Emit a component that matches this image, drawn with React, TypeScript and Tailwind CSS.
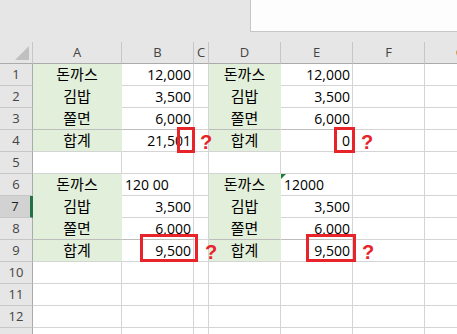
import React from 'react';

type Cell = {
  text?: string;
  green?: boolean;
  align?: 'left' | 'right' | 'center';
  line?: boolean; // darker border under the cell (top of the total row)
  flag?: boolean; // number stored as text marker
};

const colWidths = ['w-[89px]', 'w-[72px]', 'w-[15px]', 'w-[72px]', 'w-[72px]', 'w-[72px]', 'w-[72px]'];
const colNames = ['A', 'B', 'C', 'D', 'E', 'F', 'G'];

const menuRow = (name: string, price: string, line = false): Cell[] => [
  { text: name, green: true, align: 'center', line },
  { text: price, align: 'right', line },
  {},
  { text: name, green: true, align: 'center', line },
  { text: price, align: 'right', line },
  {},
  {},
];

const rows: Cell[][] = [
  menuRow('돈까스', '12,000'),
  menuRow('김밥', '3,500'),
  menuRow('쫄면', '6,000', true),
  [
    { text: '합계', green: true, align: 'center' },
    { text: '21,501', align: 'right' },
    {},
    { text: '합계', green: true, align: 'center' },
    { text: '0', align: 'right' },
    {},
    {},
  ],
  [{}, {}, {}, {}, {}, {}, {}],
  [
    { text: '돈까스', green: true, align: 'center' },
    { text: '120 00', align: 'left' },
    {},
    { text: '돈까스', green: true, align: 'center' },
    { text: '12000', align: 'left', flag: true },
    {},
    {},
  ],
  menuRow('김밥', '3,500'),
  menuRow('쫄면', '6,000', true),
  [
    { text: '합계', green: true, align: 'center' },
    { text: '9,500', align: 'right' },
    {},
    { text: '합계', green: true, align: 'center' },
    { text: '9,500', align: 'right' },
    {},
    {},
  ],
  [{}, {}, {}, {}, {}, {}, {}],
  [{}, {}, {}, {}, {}, {}, {}],
  [{}, {}, {}, {}, {}, {}, {}],
  [{}, {}, {}, {}, {}, {}, {}],
];

const korean = '"Noto Sans CJK KR", sans-serif';
const latin = '"Open Sans", "Noto Sans CJK KR", sans-serif';

function SheetCell({ cell, width, nextGreen }: { cell: Cell; width: string; nextGreen: boolean }) {
  let border = 'border-r border-b border-[#d4d4d4]';
  if (cell.green) border = nextGreen ? 'border-r border-b border-[#e2efda]' : 'border-r border-b border-r-[#e2efda] border-b-[#d4d4d4]';
  if (cell.line) border = cell.green ? 'border-r border-b border-r-[#e2efda] border-b-[#bdbdbd]' : 'border-r border-b border-r-[#d4d4d4] border-b-[#bdbdbd]';
  const justify = cell.align === 'right' ? 'justify-end pr-[2px]' : cell.align === 'left' ? 'justify-start pl-[3px]' : 'justify-center';
  return (
    <div
      className={`relative flex shrink-0 items-center h-[22px] ${width} ${border} ${justify} ${
        cell.green ? 'bg-[#e2efda] text-[15px]' : 'bg-white text-[14px]'
      } text-black whitespace-nowrap`}
      style={{ fontFamily: cell.green ? korean : latin }}
    >
      {cell.flag && (
        <span className="absolute left-0 top-0 w-0 h-0 border-t-[5px] border-r-[5px] border-t-[#1a7f37] border-r-transparent" />
      )}
      {cell.text}
    </div>
  );
}

function Mark({ className }: { className: string }) {
  return <div className={`absolute border-[3px] border-[#e8242b] ${className}`} />;
}

function Question({ className }: { className: string }) {
  return (
    <span
      className={`absolute text-[20px] font-bold leading-none text-[#e8242b] ${className}`}
      style={{ fontFamily: '"Liberation Sans", sans-serif' }}
    >
      ?
    </span>
  );
}

export default function App() {
  return (
    <div className="relative w-[457px] h-[334px] overflow-hidden bg-[#e6e6e6]" style={{ fontFamily: latin }}>
      {/* formula bar strip */}
      <div className="flex h-[42px]">
        <div className="w-[250px] shrink-0" />
        <div className="flex-1 h-[32px] bg-[#fdfdfd] border-l border-b border-[#c6c6c6]" />
      </div>

      {/* column headers */}
      <div className="flex h-[22px]">
        <div className="flex items-end justify-end pr-[3px] pb-[3px] w-[33px] shrink-0 border-r border-b border-r-[#c6c6c6] border-b-[#ababab] bg-[#e6e6e6]">
          <svg width="14" height="14" viewBox="0 0 14 14">
            <polygon points="14,0 14,14 0,14" fill="#c0c0c0" />
          </svg>
        </div>
        {colNames.map((c, i) => (
          <div
            key={c}
            className={`flex shrink-0 items-center justify-center ${colWidths[i]} border-r border-b border-r-[#c6c6c6] border-b-[#ababab] bg-[#e6e6e6] text-[13px] text-[#444]`}
          >
            {c}
          </div>
        ))}
      </div>

      {/* rows */}
      {rows.map((row, r) => (
        <div key={r} className="flex">
          <div
            className={`flex w-[33px] h-[22px] shrink-0 items-center justify-center border-b text-[13px] ${
              r === 6
                ? 'bg-[#d2d2d2] border-r-[3px] border-r-[#217346] border-b-[#c6c6c6] text-[#222]'
                : 'bg-[#e6e6e6] border-r border-r-[#ababab] border-b-[#c6c6c6] text-[#444]'
            }`}
          >
            {r + 1}
          </div>
          {row.map((cell, c) => (
            <SheetCell key={c} cell={cell} width={colWidths[c]} nextGreen={!!rows[r + 1]?.[c]?.green} />
          ))}
        </div>
      ))}

      {/* red annotations drawn over the sheet */}
      <Mark className="left-[177px] top-[127px] w-[18px] h-[26px]" />
      <Question className="left-[200px] top-[132px]" />

      <Mark className="left-[334px] top-[127px] w-[21px] h-[26px]" />
      <Question className="left-[361px] top-[132px]" />

      <Mark className="left-[140px] top-[234px] w-[58px] h-[28px]" />
      <Question className="left-[205px] top-[242px]" />

      <Mark className="left-[306px] top-[234px] w-[50px] h-[28px]" />
      <Question className="left-[362px] top-[242px]" />
    </div>
  );
}
